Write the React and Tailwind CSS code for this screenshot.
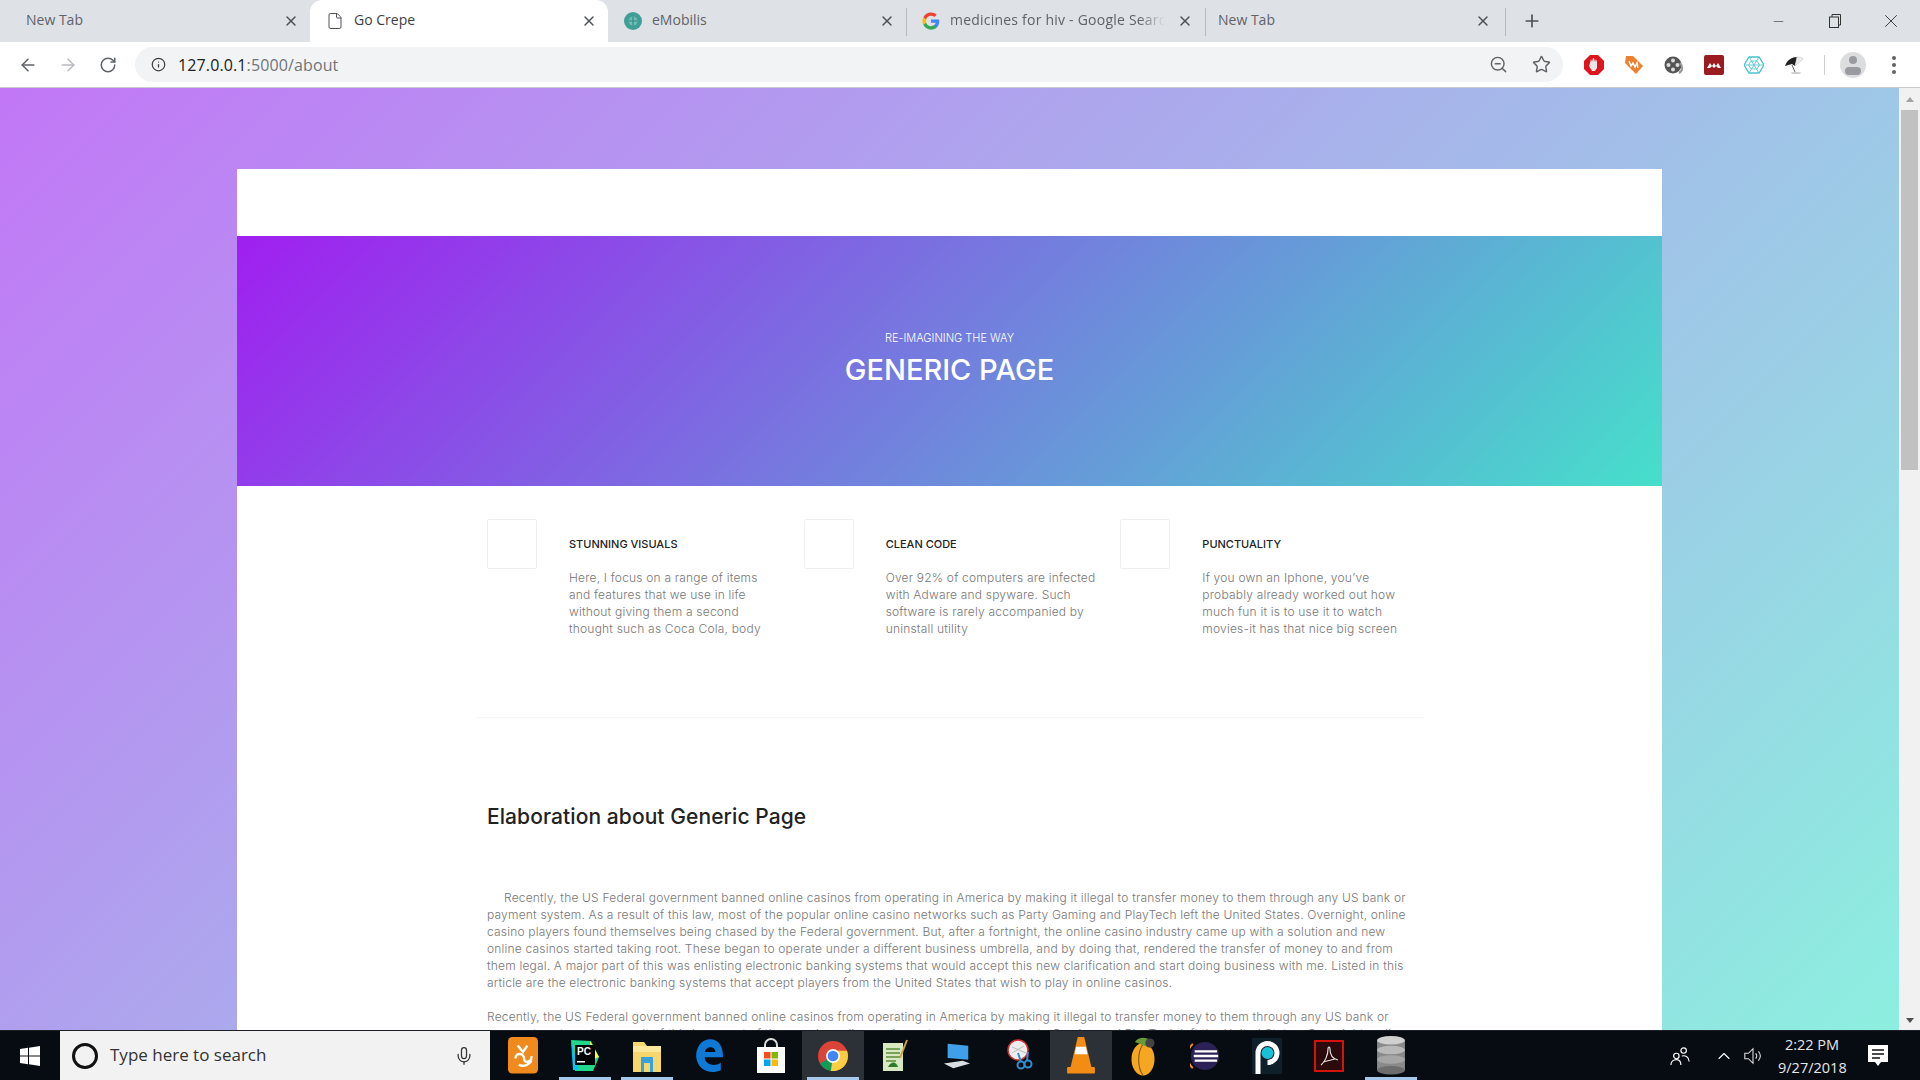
import React from 'react';
import { ArrowLeft, ArrowRight, RotateCw, Info, ZoomOut, Star, X, Plus, Mic, File, ChevronUp, Minus } from 'lucide-react';

const tabs = [
    { title: 'New Tab', icon: null },
    { title: 'Go Crepe', icon: 'file', active: true },
    { title: 'eMobilis', icon: 'globe' },
    { title: 'medicines for hiv - Google Search', icon: 'google', fade: true },
    { title: 'New Tab', icon: null },
];

const features = [
    { title: 'STUNNING VISUALS', lines: ['Here, I focus on a range of items', 'and features that we use in life', 'without giving them a second', 'thought such as Coca Cola, body'] },
    { title: 'CLEAN CODE', lines: ['Over 92% of computers are infected', 'with Adware and spyware. Such', 'software is rarely accompanied by', 'uninstall utility'] },
    { title: 'PUNCTUALITY', lines: ['If you own an Iphone, you\u2019ve', 'probably already worked out how', 'much fun it is to use it to watch', 'movies-it has that nice big screen'] },
];

const bodyLines = [
    'Recently, the US Federal government banned online casinos from operating in America by making it illegal to transfer money to them through any US bank or',
    'payment system. As a result of this law, most of the popular online casino networks such as Party Gaming and PlayTech left the United States. Overnight, online',
    'casino players found themselves being chased by the Federal government. But, after a fortnight, the online casino industry came up with a solution and new',
    'online casinos started taking root. These began to operate under a different business umbrella, and by doing that, rendered the transfer of money to and from',
    'them legal. A major part of this was enlisting electronic banking systems that would accept this new clarification and start doing business with me. Listed in this',
    'article are the electronic banking systems that accept players from the United States that wish to play in online casinos.',
];

const GoogleG = () => (
    <svg viewBox="0 0 24 24" className="w-[18px] h-[18px] shrink-0">
        <path fill="#4285F4" d="M23 12.3c0-.8-.1-1.6-.2-2.3H12v4.4h6.2c-.3 1.4-1.1 2.6-2.3 3.4v2.8h3.7c2.2-2 3.4-5 3.4-8.3z" />
        <path fill="#34A853" d="M12 23.5c3.1 0 5.7-1 7.6-2.9l-3.7-2.8c-1 .7-2.3 1.1-3.9 1.1-3 0-5.5-2-6.4-4.7H1.8v2.9c1.9 3.8 5.8 6.4 10.2 6.4z" />
        <path fill="#FBBC05" d="M5.6 14.2c-.5-1.4-.5-3 0-4.4V6.9H1.8c-1.6 3.2-1.6 7 0 10.2l3.8-2.9z" />
        <path fill="#EA4335" d="M12 5.1c1.7 0 3.2.6 4.4 1.7l3.3-3.3C17.7 1.6 15.1.5 12 .5 7.6.5 3.7 3.1 1.8 6.9l3.8 2.9C6.5 7.1 9 5.1 12 5.1z" />
    </svg>
);

const TabIcon = ({ type }) => {
    if (type === 'file') return <File size={18} strokeWidth={1.3} className="text-[#4b4f54] shrink-0" />;
    if (type === 'google') return <GoogleG />;
    if (type === 'globe') {
        return (
            <svg viewBox="0 0 16 16" className="w-[18px] h-[20px] shrink-0">
                <ellipse cx="8" cy="8" rx="8" ry="8" fill="#3f9f97" />
                <circle cx="8" cy="8" r="4" fill="#6fbdb5" />
                <path d="M4 8h8M8 4v8" stroke="#2f8a82" strokeWidth="1" />
            </svg>
        );
    }
    return null;
};

const Tab = ({ tab }) => (
    <div className={`relative w-[298px] h-[42px] flex items-center shrink-0 ${tab.active ? 'bg-white rounded-t-xl' : ''} ${tab.icon ? 'pl-[16px]' : 'pl-[14px]'} pr-[11px]`}>
        {tab.icon && <TabIcon type={tab.icon} />}
        <span className={`flex-1 overflow-hidden whitespace-nowrap text-[14px] leading-[18px] pb-[2px] ${tab.icon ? 'ml-[10px]' : ''} ${tab.active ? 'text-[#3c4043]' : 'text-[#5f6368]'} ${tab.fade ? 'tracking-[0.22px] mr-[12px] [mask-image:linear-gradient(to_right,black_88%,transparent)]' : ''}`}>{tab.title}</span>
        <X size={16} strokeWidth={2.2} className="text-[#4d5156] shrink-0" />
    </div>
);

const Divider = () => <div className="w-px h-[28px] bg-[#b5b9bf] shrink-0" />;

const TitleBar = () => (
    <div className="h-[42px] bg-[#dee1e6] flex items-center pl-[12px] shrink-0">
        <Tab tab={tabs[0]} />
        <Tab tab={tabs[1]} />
        <Tab tab={tabs[2]} />
        <div className="absolute left-[906px] top-[8px]"><Divider /></div>
        <Tab tab={tabs[3]} />
        <div className="absolute left-[1205px] top-[8px]"><Divider /></div>
        <Tab tab={tabs[4]} />
        <div className="absolute left-[1505px] top-[8px]"><Divider /></div>
        <Plus size={20} strokeWidth={2} className="text-[#4d5156] ml-[20px]" />
        <div className="ml-auto flex items-center text-[#333]">
            <div className="w-[56px] flex justify-center mr-[1px]"><Minus size={15} strokeWidth={1} /></div>
            <div className="w-[56px] flex justify-center">
                <svg viewBox="0 0 12 14" className="w-[12px] h-[14px]" fill="none" stroke="#333" strokeWidth="1">
                    <rect x="0.5" y="3" width="9" height="10.5" />
                    <path d="M3 3V.5h8.5V11H9.5" />
                </svg>
            </div>
            <div className="w-[56px] flex justify-center mr-[1px]"><X size={22} strokeWidth={1} /></div>
        </div>
    </div>
);

const Extensions = () => (
    <div className="flex items-center gap-[20px] ml-[21px]">
        <svg viewBox="0 0 20 20" className="w-[20px] h-[20px]">
            <path fill="#e0141c" d="M6 0h8l6 6v8l-6 6H6l-6-6V6z" />
            <path fill="#e8e8e8" d="M6 8l1-4 1 3 1-4 1 0 1 4 1-3 1 3v6l-2 3H8l-3-5z" />
        </svg>
        <svg viewBox="0 0 20 20" className="w-[20px] h-[20px]">
            <path fill="#ee7f2d" d="M2 1h7l10 10-7 8L1 8z" />
            <path d="M5 6l2 5 2-3 2 4 2-4 1 5" stroke="#fff" strokeWidth="1.500" fill="none" />
        </svg>
        <svg viewBox="0 0 20 20" className="w-[20px] h-[20px]">
            <circle cx="9" cy="10" r="8.5" fill="#555" />
            <circle cx="9" cy="5.5" r="2" fill="#ddd" /><circle cx="9" cy="14.5" r="2" fill="#ddd" />
            <circle cx="4.5" cy="10" r="2" fill="#ddd" /><circle cx="13.5" cy="10" r="2" fill="#ddd" />
            <path d="M16 8c3 3 3 8-1 10" stroke="#999" strokeWidth="2" fill="none" />
        </svg>
        <svg viewBox="0 0 20 20" className="w-[20px] h-[20px]">
            <rect width="20" height="20" rx="2" fill="#9b1c20" />
            <path fill="#fff" d="M3 13l3-5 2 3 2-3 2 3 2-3 3 5h-3l-2-2-2 2-2-2-2 2z" />
        </svg>
        <svg viewBox="0 0 20 20" className="w-[20px] h-[20px]" fill="none" stroke="#45c3cf" strokeWidth="1.3">
            <path d="M5 2h10l5 8-5 8H5l-5-8z" />
            <path d="M7 6h6l2.500 4-2.500 4H7l-2.500-4zM0 10h20M5 2l10 16M15 2L5 18" strokeWidth="0.8" />
        </svg>
        <svg viewBox="0 0 20 20" className="w-[20px] h-[20px]">
            <path fill="#222" d="M1 11C3 5 8 2 13 2l-2 9-3-2z" />
            <path fill="#eee" stroke="#bbb" strokeWidth="0.5" d="M13 2c3 0 5 1 6 2l-8 7z" />
            <path d="M8 10l3 7" stroke="#666" strokeWidth="1" />
            <ellipse cx="12" cy="18" rx="5" ry="1" fill="#ccc" />
        </svg>
    </div>
);

const Toolbar = () => (
    <div className="h-[46px] bg-white flex items-center shrink-0 border-b border-[#c8cacd]">
        <div className="w-[135px] flex items-center pl-[18px] gap-[20px] shrink-0">
            <ArrowLeft size={20} strokeWidth={1.8} className="text-[#5f6368]" />
            <ArrowRight size={20} strokeWidth={1.8} className="text-[#b9bbbe]" />
            <RotateCw size={18} strokeWidth={2} className="text-[#5f6368] ml-[1px]" />
        </div>
        <div className="w-[1428px] h-[35px] bg-[#f1f3f4] rounded-full flex items-center pl-[16px] pr-[12px] shrink-0">
            <Info size={15} strokeWidth={2} className="text-[#3c4043]" />
            <span className="ml-[12px] text-[16px] tracking-[0.12px] text-[#202124]">127.0.0.1<span className="text-[#70757a]">:5000/about</span></span>
            <ZoomOut size={19} strokeWidth={1.8} className="text-[#5f6368] ml-auto" />
            <Star size={19} strokeWidth={1.8} className="text-[#5f6368] ml-[24px]" />
        </div>
        <Extensions />
        <div className="w-px h-[20px] bg-[#d0d2d4] ml-[20px]" />
        <div className="w-[26px] h-[26px] rounded-full bg-[#dcdddf] ml-[15px] relative overflow-hidden flex justify-center">
            <div className="w-[8px] h-[8px] rounded-full bg-[#9a9ba0] mt-[4px]" />
            <div className="absolute bottom-[3px] w-[16px] h-[8px] rounded-full bg-[#9a9ba0]" />
        </div>
        <div className="flex flex-col gap-[3px] ml-[26px]">
            <div className="w-[4px] h-[4px] rounded-full bg-[#5f6368]" />
            <div className="w-[4px] h-[4px] rounded-full bg-[#5f6368]" />
            <div className="w-[4px] h-[4px] rounded-full bg-[#5f6368]" />
        </div>
    </div>
);

const Feature = ({ item }) => (
    <div className="flex">
        <div className="w-[50px] h-[50px] border border-[#efefef] rounded-[2px] shrink-0" />
        <div className="ml-[32px]">
            <h4 className="h-[50px] flex items-center text-[11px] font-medium text-[#222222]">{item.title}</h4>
            <p className="text-[12px] leading-[17px] font-light text-[#777777] tracking-[0.2px] whitespace-nowrap">
                {item.lines.map((l) => <span key={l} className="block">{l}</span>)}
            </p>
        </div>
    </div>
);

const Page = () => (
    <div className="mx-[237px] mt-[81px] bg-white font-['Inter',sans-serif]">
        <div className="h-[67px]" />
        <div className="h-[250px] bg-[linear-gradient(135deg,#a01ff0,#46dfcb)] flex flex-col items-center pt-[93px] text-white">
            <p className="text-[11px] leading-[18px] font-light">RE-IMAGINING THE WAY</p>
            <h1 className="text-[29px] leading-[40px] font-medium mt-[3px]">GENERIC PAGE</h1>
        </div>
        <div className="w-[950px] ml-[250px] grid grid-cols-3 pt-[33px]">
            {features.map((f) => <Feature key={f.title} item={f} />)}
        </div>
        <div className="h-px bg-[#f6f6f6] mx-[238px] mt-[80px]" />
        <h2 className="ml-[250px] mt-[85px] text-[21px] leading-[28px] font-medium tracking-[0.08px] text-[#222222]">Elaboration about Generic Page</h2>
        <div className="ml-[250px] mt-[58px] text-[12px] leading-[17px] font-light text-[#777777] tracking-[0.19px] whitespace-nowrap">
            <p className="mb-[17px]">
                {bodyLines.map((l, i) => <span key={l} className={`block ${i === 0 ? 'pl-[17px]' : ''}`}>{l}</span>)}
            </p>
            <p>{bodyLines[0]}</p>
            <p>{bodyLines[1]}</p>
        </div>
    </div>
);

const Scrollbar = () => (
    <div className="w-[21px] bg-[#f1f1f1] flex flex-col items-center shrink-0">
        <div className="h-[22px] flex items-center justify-center">
            <div className="w-0 h-0 border-x-[4px] border-x-transparent border-b-[5px] border-b-[#a3a3a3]" />
        </div>
        <div className="w-[17px] h-[360px] bg-[#c1c1c1]" />
        <div className="mt-auto h-[20px] flex items-center justify-center">
            <div className="w-0 h-0 border-x-[4px] border-x-transparent border-t-[5px] border-t-[#505050]" />
        </div>
    </div>
);

const taskIcons = [
    { key: 'uc', node: (
        <svg viewBox="0 0 28 34"><rect width="28" height="34" rx="4" fill="#f08a1d" /><path d="M7 20c0-6 8-5 8 0s7 4 7-2M10 26c5 2 10 0 12-4M9 8l5 6 4-6" stroke="#fff" strokeWidth="2.200" fill="none" /></svg>
    ) },
    { key: 'pc', active: true, node: (
        <svg viewBox="0 0 30 34"><path d="M1 1l20 1 8 16-6 14H5z" fill="#21d789" /><path d="M1 1l8 30H3z" fill="#07c3f2" /><path d="M20 2l9 16-8 3z" fill="#fcf84a" /><rect x="5" y="6" width="20" height="20" fill="#000" /><text x="7" y="16" fontSize="10" fontWeight="700" fill="#fff" fontFamily="Liberation Sans">PC</text><rect x="7" y="22" width="8" height="1.500" fill="#fff" /></svg>
    ) },
    { key: 'files', active: true, node: (
        <svg viewBox="0 0 30 34"><path d="M1 3h11l3 4h14v26H1z" fill="#f5d76e" /><rect x="1" y="7" width="28" height="6" fill="#fbe89a" /><rect x="9" y="18" width="12" height="15" fill="#3aa0da" /><rect x="12" y="24" width="6" height="9" fill="#f5d76e" /></svg>
    ) },
    { key: 'edge', node: (
        <svg viewBox="0 0 28 34"><path d="M2 18C2 8 8 2 15 2c8 0 12 7 12 15v2H10c0 7 9 9 15 5v7c-9 4-22 1-23-13zm8-4h10c0-6-9-6-10 0z" fill="#0f78d4" /></svg>
    ) },
    { key: 'store', node: (
        <svg viewBox="0 0 30 36"><path d="M9 10V7a6 6 0 0 1 12 0v3" fill="none" stroke="#ddd" strokeWidth="2" /><rect x="1" y="9" width="28" height="26" fill="#fff" /><rect x="8" y="14" width="6.500" height="6.500" fill="#f25022" /><rect x="15.500" y="14" width="6.500" height="6.500" fill="#7fba00" /><rect x="8" y="21.500" width="6.500" height="6.500" fill="#00a4ef" /><rect x="15.500" y="21.500" width="6.500" height="6.500" fill="#ffb900" /></svg>
    ) },
    { key: 'chrome', bg: true, active: true, node: (
        <svg viewBox="0 0 28 28"><circle cx="14" cy="14" r="14" fill="#db4437" /><path d="M14 14L1.900 21A14 14 0 0 0 14 28l7-14z" fill="#0f9d58" /><path d="M14 14l-2 14A14 14 0 0 0 28 14c0-2-.4-3.600-1-5H14z" fill="#ffcd40" /><circle cx="14" cy="14" r="6.500" fill="#fff" /><circle cx="14" cy="14" r="5" fill="#4285f4" /></svg>
    ) },
    { key: 'notepad', node: (
        <svg viewBox="0 0 30 34"><rect x="3" y="4" width="20" height="28" fill="#d8e8c0" /><path d="M6 10h14M6 14h14M6 18h14M6 22h10" stroke="#5a8a3a" strokeWidth="1.500" /><path d="M8 28c3-6 8-6 10 0" fill="#2d7a2d" /><path d="M27 1l-7 18" stroke="#c9a23a" strokeWidth="2" /></svg>
    ) },
    { key: 'computer', node: (
        <svg viewBox="0 0 32 32"><path d="M6 3l22 2v15l-22-2z" fill="#3f9fe8" /><path d="M2 24l20-3 8 3-18 5z" fill="#d8dde2" /></svg>
    ) },
    { key: 'snip', node: (
        <svg viewBox="0 0 30 34"><circle cx="14" cy="11" r="10" fill="#eee" stroke="#c33" strokeWidth="1.500" /><path d="M8 8l14 6M8 14l12-7" stroke="#bbb" /><circle cx="17" cy="26" r="3.500" fill="none" stroke="#2f8fd0" strokeWidth="2" /><circle cx="24" cy="25" r="3.500" fill="none" stroke="#2f8fd0" strokeWidth="2" /><path d="M14 14l3 9M24 13l-1 9" stroke="#2f8fd0" strokeWidth="2" /></svg>
    ) },
    { key: 'vlc', bg: true, node: (
        <svg viewBox="0 0 28 36"><path d="M11 1h6l7 29H4z" fill="#f28c13" /><path d="M9.500 10h9l1.500 7H8z" fill="#fff" /><rect x="1" y="29" width="26" height="6" rx="1" fill="#f28c13" /></svg>
    ) },
    { key: 'fl', node: (
        <svg viewBox="0 0 26 36"><ellipse cx="13" cy="21" rx="10" ry="14" fill="#f5a623" /><path d="M13 8c-5 7-5 20 0 27" stroke="#8a5a10" fill="none" /><path d="M6 6c3-4 9-5 14-1l-4 5z" fill="#6a9a35" /><circle cx="19" cy="7" r="4" fill="#444" /></svg>
    ) },
    { key: 'eclipse', node: (
        <svg viewBox="0 0 32 32"><circle cx="16" cy="16" r="15" fill="#2c2255" /><path d="M3 3a18 18 0 0 0 0 26" fill="none" stroke="#f7941e" strokeWidth="2" /><path d="M5 11h24M4 16h26M5 21h24" stroke="#fff" strokeWidth="2.500" /></svg>
    ) },
    { key: 'p', node: (
        <svg viewBox="0 0 30 36"><rect width="30" height="36" fill="#10202a" /><path d="M6 36V15a9.500 9.500 0 1 1 9.500 9.500" fill="none" stroke="#fff" strokeWidth="5" /><circle cx="15.500" cy="15" r="6" fill="#19c1d6" /></svg>
    ) },
    { key: 'pdf', node: (
        <svg viewBox="0 0 30 32"><rect x="1" y="1" width="28" height="30" fill="#2a0a0a" stroke="#d2140c" strokeWidth="2" /><path d="M7 25c4-3 7-10 7-16 0-3 2-2 2 0 0 6 3 10 8 11M9 22l12-3" fill="none" stroke="#ddd" strokeWidth="1.200" /></svg>
    ) },
    { key: 'db', active: true, node: (
        <svg viewBox="0 0 28 36"><rect x="1" y="4" width="26" height="28" fill="#8a8a8a" /><ellipse cx="14" cy="32" rx="13" ry="4" fill="#6d6d6d" /><ellipse cx="14" cy="22" rx="13" ry="4" fill="#a5a5a5" /><ellipse cx="14" cy="13" rx="13" ry="4" fill="#b9b9b9" /><ellipse cx="14" cy="4" rx="13" ry="4" fill="#d0d0d0" /></svg>
    ) },
];

const Taskbar = () => (
    <div className="h-[50px] bg-[#070c12] flex items-stretch shrink-0 border-t border-[#1c2026]">
        <div className="w-[60px] flex items-center justify-center">
            <svg viewBox="0 0 20 20" className="w-[20px] h-[20px]" fill="#fff">
                <path d="M0 3l8-1.200V9.500H0zM9 1.700L20 0v9.500H9zM0 10.500h8v7.700l-8-1.200zM9 10.500h11V20L9 18.300z" />
            </svg>
        </div>
        <div className="w-[430px] bg-[#f2f2f2] flex items-center pl-[12px] pr-[16px] font-['Open_Sans',sans-serif]">
            <div className="w-[26px] h-[26px] rounded-full border-[3px] border-[#111]" />
            <span className="ml-[12px] text-[17px] leading-[22px] pb-[1px] text-[#333]">Type here to search</span>
            <Mic size={20} strokeWidth={1.500} className="ml-auto text-[#333]" />
        </div>
        <div className="flex pl-[2px]">
            {taskIcons.map((ic) => (
                <div key={ic.key} className={`relative w-[62px] flex items-center justify-center ${ic.bg ? 'bg-[#2c3138]' : ''}`}>
                    <div className="w-[30px] h-[34px] flex items-center justify-center">{ic.node}</div>
                    {ic.active && <div className="absolute bottom-0 left-[5px] right-[5px] h-[3px] bg-[#a5c8ec]" />}
                </div>
            ))}
        </div>
        <div className="ml-auto flex items-center text-white font-['Open_Sans',sans-serif]">
            <svg viewBox="0 0 22 22" className="w-[20px] h-[20px]" fill="none" stroke="#fff" strokeWidth="1.300">
                <circle cx="7" cy="11" r="3" /><path d="M1 21c0-4 3-6 6-6s5 2 5 6" />
                <circle cx="15" cy="5" r="3" /><path d="M13 11c4-1 8 1 8 6" />
            </svg>
            <ChevronUp size={20} strokeWidth={1.300} className="ml-[24px]" />
            <svg viewBox="0 0 22 22" className="w-[20px] h-[20px] ml-[9px]" fill="none" stroke="#ddd" strokeWidth="1.200">
                <path d="M2 8h4l5-5v16l-5-5H2zM14 8c1.500 2 1.500 4 0 6M17 6c2.500 3 2.500 7 0 10" />
            </svg>
            <div className="w-[68px] ml-[15px] text-center text-[14.500px] leading-[23px] text-[#e6e6e6] whitespace-nowrap">
                <div>2:22 PM</div>
                <div>9/27/2018</div>
            </div>
            <div className="w-[64px] mr-[10px] flex justify-center">
                <svg viewBox="0 0 20 22" className="w-[20px] h-[22px]">
                    <path fill="#fff" d="M0 0h20v17h-7l-3 4-3-4H0z" />
                    <path stroke="#111" strokeWidth="1.500" d="M4 5h12M4 9h12M4 13h8" />
                </svg>
            </div>
        </div>
    </div>
);

const App = () => {
    return (
        <div className="relative w-[1920px] h-[1080px] flex flex-col overflow-hidden font-['Open_Sans',sans-serif]">
            <TitleBar />
            <Toolbar />
            <div className="flex flex-1 min-h-0 bg-[linear-gradient(135deg,#c277f6,#8cf0df)]">
                <div className="flex-1 overflow-hidden">
                    <Page />
                </div>
                <Scrollbar />
            </div>
            <Taskbar />
        </div>
    );
};

export default App;
